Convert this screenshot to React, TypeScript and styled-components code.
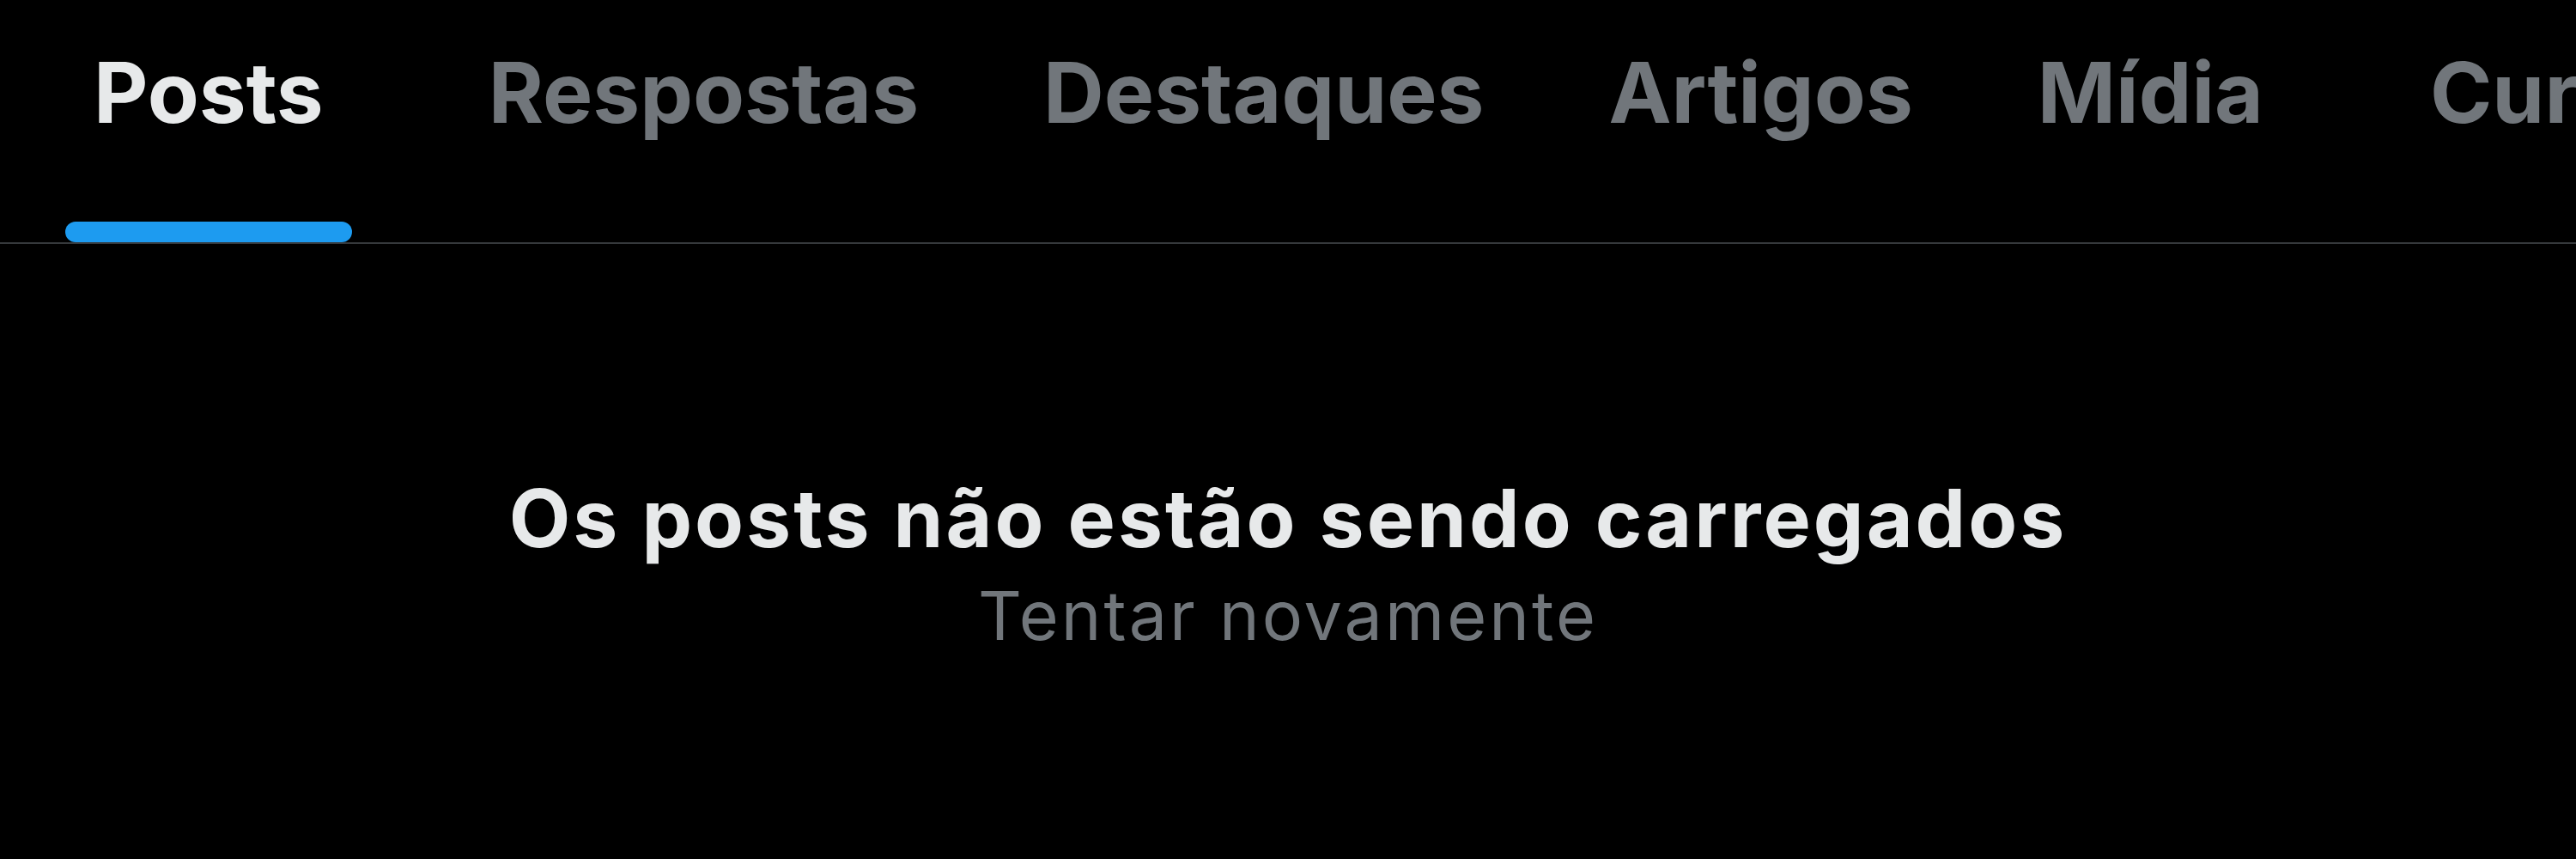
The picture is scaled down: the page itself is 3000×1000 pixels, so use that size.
import React from "react";
import styled, { createGlobalStyle } from "styled-components";

const Global = createGlobalStyle`
  html, body {
    margin: 0;
    padding: 0;
    background: #000;
  }
  body {
    font-family: Inter, "Noto Sans", "Liberation Sans", sans-serif;
    -webkit-font-smoothing: antialiased;
  }
`;

const Page = styled.div`
  width: 3000px;
  height: 1000px;
  background: #000;
  overflow: hidden;
  display: flex;
  flex-direction: column;
`;

const TabBar = styled.nav`
  display: flex;
  align-items: stretch;
  height: 282px;
  padding-left: 109px;
  gap: 145px;
  border-bottom: 2px solid #36393c;
  overflow: hidden;
  flex-shrink: 0;
`;

const Tab = styled.div<{ $trail?: number }>`
  display: flex;
  flex-direction: column;
  justify-content: space-between;
  align-items: stretch;
  flex-shrink: 0;
  margin-right: ${(p) => p.$trail || 0}px;
`;

const TabLabel = styled.span<{ $active?: boolean }>`
  display: block;
  padding-top: 59px;
  font-size: 98px;
  line-height: 1;
  font-weight: 700;
  white-space: nowrap;
  color: ${(p) => (p.$active ? "#e7e9ea" : "#71767b")};
`;

const Indicator = styled.div`
  height: 24px;
  margin: 0 -33px;
  border-radius: 12px;
  background: #1d9bf0;
`;

const Empty = styled.section`
  display: flex;
  flex-direction: column;
  align-items: center;
  padding-top: 273px;
`;

const Title = styled.h2`
  margin: 0;
  font-size: 93px;
  line-height: 1;
  font-weight: 700;
  letter-spacing: 3px;
  color: #e7e9ea;
`;

const Retry = styled.button`
  margin-top: 27px;
  padding: 0;
  border: none;
  background: none;
  font-family: inherit;
  font-size: 79px;
  line-height: 1;
  font-weight: 400;
  letter-spacing: 3px;
  color: #71767b;
  cursor: pointer;
`;

const tabs = [
  { label: "Posts", active: true, trail: 47 },
  { label: "Respostas" },
  { label: "Destaques" },
  { label: "Artigos" },
  { label: "Mídia", trail: 49 },
  { label: "Curtidas" },
];

export default function App() {
  return (
    <Page>
      <Global />
      <TabBar>
        {tabs.map((t) => (
          <Tab key={t.label} $trail={t.trail}>
            <TabLabel $active={t.active}>{t.label}</TabLabel>
            {t.active ? <Indicator /> : null}
          </Tab>
        ))}
      </TabBar>
      <Empty>
        <Title>Os posts não estão sendo carregados</Title>
        <Retry>Tentar novamente</Retry>
      </Empty>
    </Page>
  );
}
